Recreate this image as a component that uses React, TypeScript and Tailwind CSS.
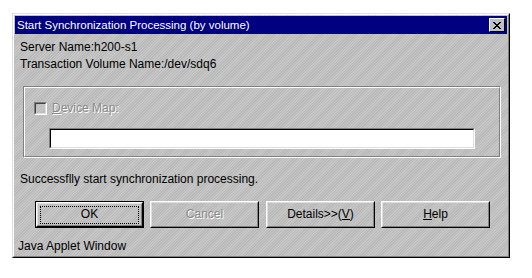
import React from "react"

const hatch =
  "bg-[repeating-linear-gradient(135deg,#c7c7c7_0px,#c7c7c7_1px,#b9b9b9_1px,#b9b9b9_2px)]"

function ClassicButton({
  label,
  isDefault,
  disabled,
}: {
  label: React.ReactNode
  isDefault?: boolean
  disabled?: boolean
}) {
  const body = (
    <div className="w-full h-full border border-t-white border-l-white border-r-black border-b-black">
      <div className="w-full h-full border border-t-[#dfdfdf] border-l-[#dfdfdf] border-r-[#808080] border-b-[#808080] flex items-center justify-center">
        {isDefault ? (
          <div className="w-[99px] h-[18px] border border-dotted border-black flex items-center justify-center">
            {label}
          </div>
        ) : disabled ? (
          <span className="text-[#8a8a8a] [text-shadow:1px_1px_0_#ffffff]">{label}</span>
        ) : (
          <span>{label}</span>
        )}
      </div>
    </div>
  )
  return isDefault ? (
    <div className="w-[109px] h-[27px] border border-black">{body}</div>
  ) : (
    <div className="w-[109px] h-[27px]">{body}</div>
  )
}

export default function App() {
  return (
    <div
      className="w-[532px] h-[278px] bg-white pl-[12px] pt-[13px] text-[12px] leading-[17px] text-black"
      style={{ fontFamily: '"Liberation Sans", Arial, sans-serif' }}
    >
      <div className="w-[498px] h-[245px] border border-t-[#dfdfdf] border-l-[#dfdfdf] border-r-black border-b-black">
        <div className={`w-full h-full border border-t-white border-l-white border-r-[#808080] border-b-[#808080] p-px ${hatch} flex flex-col`}>
          {/* title bar */}
          <div className="shrink-0 h-[18px] bg-[#000080] flex items-center justify-between pl-[2px] pr-[2px]">
            <span className="text-white text-[11.5px] leading-[18px]">
              Start Synchronization Processing (by volume)
            </span>
            <div className="w-[16px] h-[14px] bg-[#c0c0c0] border border-t-white border-l-white border-r-black border-b-black flex items-center justify-center">
              <svg width="8" height="7" viewBox="0 0 8 7" shapeRendering="crispEdges">
                <path d="M0 0h2v1h-2zM6 0h2v1h-2zM1 1h2v1h-2zM5 1h2v1h-2zM2 2h4v1h-4zM3 3h2v1h-2zM2 4h4v1h-4zM1 5h2v1h-2zM5 5h2v1h-2zM0 6h2v1h-2zM6 6h2v1h-2z" fill="black" />
              </svg>
            </div>
          </div>

          {/* info lines */}
          <div className="shrink-0 pl-[5px] pt-[5px]">
            <div>Server Name:h200-s1</div>
            <div>Transaction Volume Name:/dev/sdq6</div>
          </div>

          {/* group box */}
          <div className="shrink-0 ml-[8px] mr-[6px] mt-[13px] h-[72px] border border-t-[#808080] border-l-[#808080] border-r-white border-b-white">
            <div className="h-full border border-t-white border-l-white border-r-[#808080] border-b-[#808080] pl-[9px] pt-[14px]">
              <div className="flex items-center gap-[5px] h-[13px]">
                <div className="w-[13px] h-[13px] border border-t-[#808080] border-l-[#808080] border-r-white border-b-white">
                  <div className="w-full h-full border border-t-[#404040] border-l-[#404040] border-r-[#dfdfdf] border-b-[#dfdfdf]" />
                </div>
                <span className="text-[#8a8a8a] [text-shadow:1px_1px_0_#ffffff]">
                  <span className="underline">D</span>evice Map:
                </span>
              </div>
              <div className="ml-[15px] mt-[13px] w-[426px] h-[21px] border border-t-[#808080] border-l-[#808080] border-r-white border-b-white">
                <div className="w-full h-full bg-white border border-t-black border-l-black border-r-[#dfdfdf] border-b-[#dfdfdf]" />
              </div>
            </div>
          </div>

          <div className="shrink-0 pl-[5px] mt-[13px]">Successflly start synchronization processing.</div>

          {/* buttons */}
          <div className="shrink-0 flex pl-[20px] mt-[13px] gap-[6px]">
            <ClassicButton label="OK" isDefault />
            <ClassicButton label="Cancel" disabled />
            <div className="ml-px">
              <ClassicButton
                label={
                  <>
                    Details&gt;&gt;(<span className="underline">V</span>)
                  </>
                }
              />
            </div>
            <ClassicButton
              label={
                <>
                  <span className="underline">H</span>elp
                </>
              }
            />
          </div>

          <div className="shrink-0 pl-[3px] mt-[11px] leading-[14px]">Java Applet Window</div>
        </div>
      </div>
    </div>
  )
}
